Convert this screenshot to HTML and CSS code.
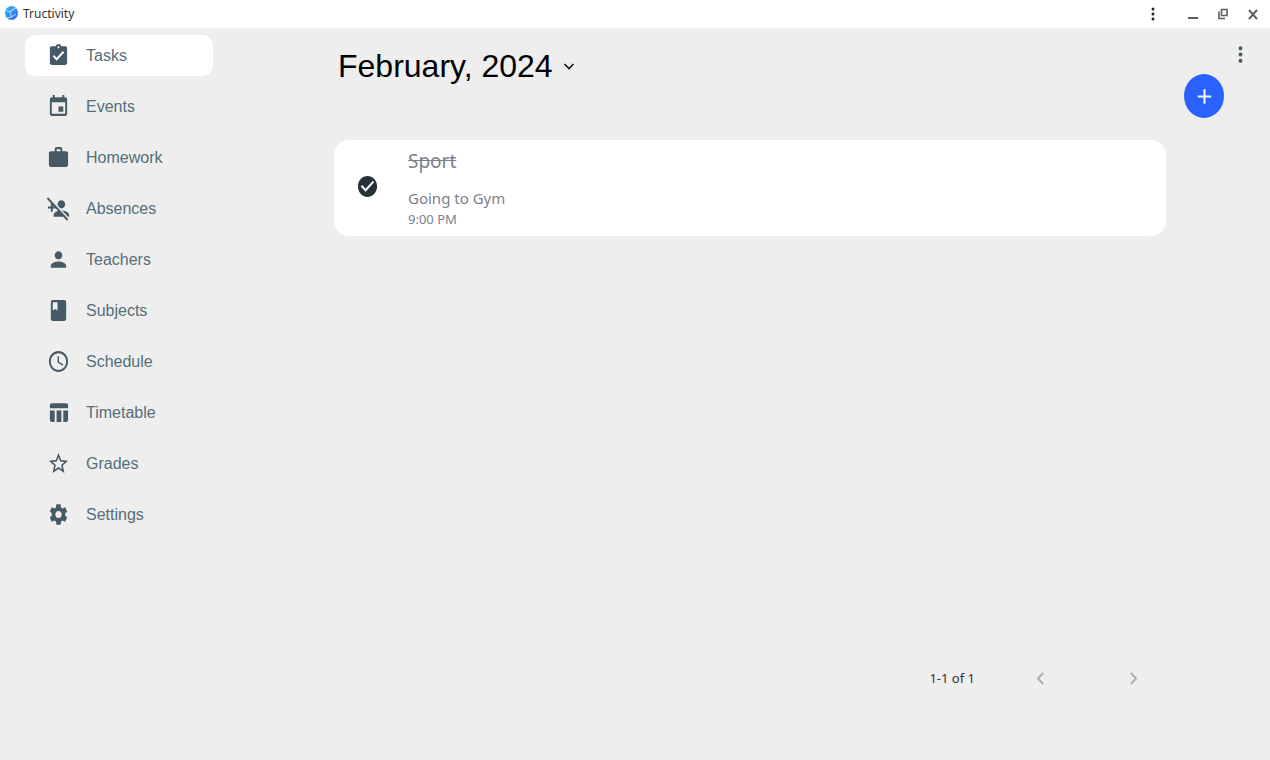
FILE: index.html
```html
<!DOCTYPE html>
<html lang="en">
<head>
<meta charset="utf-8">
<meta name="viewport" content="width=device-width, initial-scale=1">
<title>Tructivity</title>
<link rel="stylesheet" href="styles.css">
</head>
<body>
<header class="titlebar">
  <svg class="logo" viewBox="0 0 24 24" preserveAspectRatio="none" aria-hidden="true">
    <defs><linearGradient id="globe" x1="0" y1="0" x2="1" y2="1"><stop offset="0" stop-color="#25c3f5"/><stop offset="1" stop-color="#3a5cf5"/></linearGradient></defs>
    <circle cx="12" cy="12" r="12" fill="url(#globe)"/>
    <path d="M3 8L9 10L20 3M9 10L12 19L4 20M12 19L20 14" fill="none" stroke="#b4dcff" stroke-width="1.800"/>
  </svg>
  <span class="app-name">Tructivity</span>
  <div class="window-controls">
    <button class="win-btn menu" aria-label="App menu"><svg viewBox="0 0 16 16"><path fill="#222" d="M6.500 3a1.500 1.500 0 1 1 3 0a1.500 1.500 0 1 1-3 0M6.500 8a1.500 1.500 0 1 1 3 0a1.500 1.500 0 1 1-3 0M6.500 13a1.500 1.500 0 1 1 3 0a1.500 1.500 0 1 1-3 0"/></svg></button>
    <button class="win-btn" aria-label="Minimize"><svg viewBox="0 0 16 16"><path fill="#5a5e63" d="M3 11h10v2H3z"/></svg></button>
    <button class="win-btn" aria-label="Restore"><svg viewBox="0 0 16 16"><path fill="none" stroke="#5a5e63" stroke-width="1.600" d="M6.500 3.500h5.500v6H6.500zM4 5.500v7h6"/></svg></button>
    <button class="win-btn" aria-label="Close"><svg viewBox="0 0 16 16"><path fill="none" stroke="#5a5e63" stroke-width="2" d="M4 4l8 9M12 4l-8 9"/></svg></button>
  </div>
</header>
<div class="app">
  <nav class="sidebar" aria-label="Main">
    <a class="nav-item active" href="#tasks" aria-current="page"><svg class="icon" viewBox="0 0 24 24" preserveAspectRatio="none"><path d="M19 3h-4.180C14.400 1.840 13.300 1 12 1s-2.400.84-2.820 2H5c-1.100 0-2 .9-2 2v14c0 1.100.9 2 2 2h14c1.100 0 2-.9 2-2V5c0-1.100-.9-2-2-2zm-7 0c.55 0 1 .45 1 1s-.45 1-1 1-1-.45-1-1 .45-1 1-1zm-2 14l-4-4 1.410-1.410L10 14.170l6.590-6.590L18 9l-8 8z"/></svg>Tasks</a>
    <a class="nav-item" href="#events"><svg class="icon" viewBox="0 0 24 24" preserveAspectRatio="none"><path d="M17 12h-5v5h5v-5zM16 1v2H8V1H6v2H5c-1.100 0-2 .9-2 2v14c0 1.100.9 2 2 2h14c1.100 0 2-.9 2-2V5c0-1.100-.9-2-2-2h-1V1h-2zm3 18H5V8h14v11z"/></svg>Events</a>
    <a class="nav-item" href="#homework"><svg class="icon" viewBox="0 0 24 24" preserveAspectRatio="none"><path d="M20 6h-4V4c0-1.110-.89-2-2-2h-4c-1.110 0-2 .89-2 2v2H4c-1.110 0-2 .89-2 2v11c0 1.110.89 2 2 2h16c1.110 0 2-.89 2-2V8c0-1.110-.89-2-2-2zm-6 0h-4V4h4v2z"/></svg>Homework</a>
    <a class="nav-item" href="#absences"><svg class="icon" viewBox="0 0 24 24" preserveAspectRatio="none"><defs><mask id="cut" maskUnits="userSpaceOnUse" x="-2" y="-2" width="28" height="28"><path fill="#fff" d="M-2-2h28v28H-2z"/><path stroke="#000" stroke-width="2" d="M0-.400L24 23.600"/></mask></defs><path mask="url(#cut)" d="M15 12c2.210 0 4-1.790 4-4s-1.790-4-4-4-4 1.790-4 4 1.790 4 4 4zM6 10V7H4v3H1v2h3v3h2v-3h3v-2H6zm9 4c-2.670 0-8 1.340-8 4v2h16v-2c0-2.660-5.330-4-8-4z"/><path class="slash" d="M.5 2L21.500 23"/></svg>Absences</a>
    <a class="nav-item" href="#teachers"><svg class="icon" viewBox="0 0 24 24" preserveAspectRatio="none"><path d="M12 12c2.210 0 4-1.790 4-4s-1.790-4-4-4-4 1.790-4 4 1.790 4 4 4zm0 2c-2.670 0-8 1.340-8 4v2h16v-2c0-2.660-5.330-4-8-4z"/></svg>Teachers</a>
    <a class="nav-item" href="#subjects"><svg class="icon" viewBox="0 0 24 24" preserveAspectRatio="none"><path d="M18 2H6c-1.100 0-2 .9-2 2v16c0 1.100.9 2 2 2h12c1.100 0 2-.9 2-2V4c0-1.100-.9-2-2-2zM6 4h5v8l-2.500-1.500L6 12V4z"/></svg>Subjects</a>
    <a class="nav-item" href="#schedule"><svg class="icon" viewBox="0 0 24 24" preserveAspectRatio="none"><path d="M11.990 2C6.470 2 2 6.480 2 12s4.470 10 9.990 10C17.520 22 22 17.520 22 12S17.520 2 11.990 2zM12 20c-4.420 0-8-3.580-8-8s3.580-8 8-8 8 3.580 8 8-3.580 8-8 8zm.5-13H11v6l5.250 3.150.75-1.230-4.500-2.670z"/></svg>Schedule</a>
    <a class="nav-item" href="#timetable"><svg class="icon" viewBox="0 0 24 24" preserveAspectRatio="none"><path d="M10 10.020h5V21h-5zM17 21h3c1.100 0 2-.9 2-2v-9h-5v11zm3-18H5c-1.100 0-2 .9-2 2v3h19V5c0-1.100-.9-2-2-2zM3 19c0 1.100.9 2 2 2h3V10H3v9z"/></svg>Timetable</a>
    <a class="nav-item" href="#grades"><svg class="icon" viewBox="0 0 24 24" preserveAspectRatio="none"><path d="M22 9.240l-7.190-.62L12 2 9.190 8.630 2 9.240l5.460 4.730L5.820 21 12 17.270 18.180 21l-1.630-7.030L22 9.240zM12 15.400l-3.760 2.270 1-4.280-3.320-2.880 4.380-.38L12 6.100l1.710 4.040 4.380.38-3.320 2.880 1 4.280L12 15.400z"/></svg>Grades</a>
    <a class="nav-item" href="#settings"><svg class="icon" viewBox="1 1 22 22" preserveAspectRatio="none"><path transform="translate(1.800 1.200) scale(.85 .9)" d="M19.500 12c0-.34-.03-.66-.07-.98l2.110-1.650c.19-.15.24-.42.12-.64l-2-3.460c-.12-.22-.39-.3-.61-.22l-2.490 1c-.52-.4-1.080-.73-1.690-.98l-.38-2.650A.488.488 0 0 0 14 2h-4c-.25 0-.46.18-.49.42l-.38 2.650c-.61.25-1.170.59-1.690.98l-2.490-1c-.23-.09-.49 0-.61.22l-2 3.460c-.13.22-.07.49.12.64l2.110 1.650c-.04.32-.07.65-.07.980s.03.66.07.980l-2.110 1.650c-.19.15-.24.42-.12.640l2 3.460c.12.22.39.3.61.22l2.490-1c.52.4 1.080.73 1.690.98l.38 2.650c.03.24.24.42.49.42h4c.25 0 .46-.18.49-.42l.38-2.650c.61-.25 1.170-.59 1.690-.98l2.490 1c.23.09.49 0 .61-.22l2-3.460c.12-.22.07-.49-.12-.64l-2.110-1.650c.04-.32.07-.64.07-.98zM12 15.500a3.500 3.500 0 1 1 0-7 3.500 3.500 0 0 1 0 7z"/></svg>Settings</a>
  </nav>
  <main class="content">
    <button class="month"><span>February, 2024</span><svg viewBox="0 0 12 12"><path fill="none" stroke="#111" stroke-width="1.600" d="M1.500 4L6 8.500 10.500 4"/></svg></button>
    <article class="task">
      <label class="check"><input type="checkbox" checked aria-label="Sport completed"><svg viewBox="0 0 24 24" preserveAspectRatio="none"><path d="M12 2C6.480 2 2 6.480 2 12s4.480 10 10 10 10-4.480 10-10S17.520 2 12 2zm-2 15l-5-5 1.410-1.410L10 14.170l7.590-7.590L19 8l-9 9z"/></svg></label>
      <div class="task-text">
        <h2 class="task-title">Sport</h2>
        <p class="task-note">Going to Gym</p>
        <p class="task-time">9:00 PM</p>
      </div>
    </article>
    <footer class="pager">
      <span>1-1 of 1</span>
      <button class="page-btn" disabled aria-label="Previous page"><svg viewBox="0 0 24 24" preserveAspectRatio="none"><path d="M15.410 7.410L14 6l-6 6 6 6 1.410-1.410L10.830 12z"/></svg></button>
      <button class="page-btn" disabled aria-label="Next page"><svg viewBox="0 0 24 24" preserveAspectRatio="none"><path d="M8.590 16.590L10 18l6-6-6-6-1.410 1.410L13.170 12z"/></svg></button>
    </footer>
  </main>
  <aside class="actions">
    <button class="more" aria-label="More options"><svg class="icon" viewBox="0 0 24 24" preserveAspectRatio="none"><path d="M12 8c1.100 0 2-.9 2-2s-.9-2-2-2-2 .9-2 2 .9 2 2 2zm0 2c-1.100 0-2 .9-2 2s.9 2 2 2 2-.9 2-2-.9-2-2-2zm0 6c-1.100 0-2 .9-2 2s.9 2 2 2 2-.9 2-2-.9-2-2-2z"/></svg></button>
    <button class="add" aria-label="Add task"><svg viewBox="0 0 24 24" preserveAspectRatio="none"><path d="M19 13h-6v6h-2v-6H5v-2h6V5h2v6h6v2z"/></svg></button>
  </aside>
</div>
</body>
</html>
```
FILE: styles.css
```css
* { box-sizing: border-box; }
body {
  margin: 0;
  min-height: 100vh;
  display: flex;
  flex-direction: column;
  background: #eeeeee;
  font-family: "Liberation Sans", Arial, sans-serif;
}
button { border: 0; padding: 0; background: none; color: inherit; font: inherit; cursor: pointer; }
svg { display: block; flex: none; }
h2, p { margin: 0; font-weight: 400; }

.titlebar {
  display: flex;
  align-items: center;
  height: 29px;
  padding: 0 9px 0 5px;
  background: #fff;
  border-bottom: 1px solid #f0f0f0;
  font-family: "Noto Sans", sans-serif;
  color: #333;
}
.logo { width: 13px; height: 14px; margin-bottom: 2px; }
.app-name { margin-left: 5px; font-size: 12px; line-height: 16px; }
.window-controls { display: flex; gap: 14px; margin-left: auto; }
.win-btn svg { width: 16px; height: 16px; }
.menu { margin-right: 10px; }

.app { flex: 1; display: flex; }
.sidebar {
  display: flex;
  flex-direction: column;
  gap: 10px;
  width: 213px;
  padding: 6px 0 0 25px;
}
.nav-item {
  display: flex;
  align-items: center;
  gap: 16px;
  height: 41px;
  padding: 0 22px;
  border-radius: 10px;
  color: #546e7a;
  font-size: 16px;
  text-decoration: none;
}
.nav-item.active { background: #fff; }
.icon { width: 23px; height: 25px; fill: #455a64; overflow: visible; }
.slash { fill: none; stroke: #455a64; stroke-width: 2; }

.content {
  flex: 1;
  display: flex;
  flex-direction: column;
  align-items: flex-start;
  padding: 17px 0 66px 121px;
}
.month {
  display: flex;
  align-items: center;
  gap: 10px;
  padding: 0 4px;
  font-size: 32px;
  line-height: 40px;
  color: #000;
}
.month svg { width: 12px; height: 12px; }
.task {
  align-self: stretch;
  display: flex;
  align-items: center;
  gap: 29px;
  margin-top: 54px;
  padding: 8px 22px 6px;
  border-radius: 15px;
  background: #fff;
  font-family: "Noto Sans", sans-serif;
  color: #7b818c;
}
.check { position: relative; margin-bottom: 6px; cursor: pointer; }
.check input { position: absolute; inset: 0; width: 100%; height: 100%; margin: 0; opacity: 0; }
.check svg { width: 23px; height: 25px; fill: #263238; }
.task-title { font-size: 19px; line-height: 26px; text-decoration: line-through; }
.task-note { margin-top: 13px; font-size: 15px; line-height: 22px; }
.task-time { font-size: 13px; line-height: 21px; }

.pager {
  display: flex;
  align-items: center;
  align-self: flex-end;
  margin-top: auto;
  padding-right: 21px;
  font-family: "Noto Sans", sans-serif;
  font-size: 13px;
  line-height: 32px;
  color: #333;
}
.page-btn { margin-left: 70px; }
.pager span + .page-btn { margin-left: 54px; }
.page-btn svg { width: 23px; height: 25px; fill: #adadad; }

.actions {
  display: flex;
  flex-direction: column;
  align-items: flex-start;
  width: 104px;
  padding: 13px 18px 0 18px;
}
.more { align-self: flex-end; }
.add {
  display: grid;
  place-items: center;
  width: 40px;
  height: 44px;
  margin-top: 7px;
  border-radius: 50%;
  background: #2962ff;
}
.add svg { width: 23px; height: 25px; fill: #fff; }
```
